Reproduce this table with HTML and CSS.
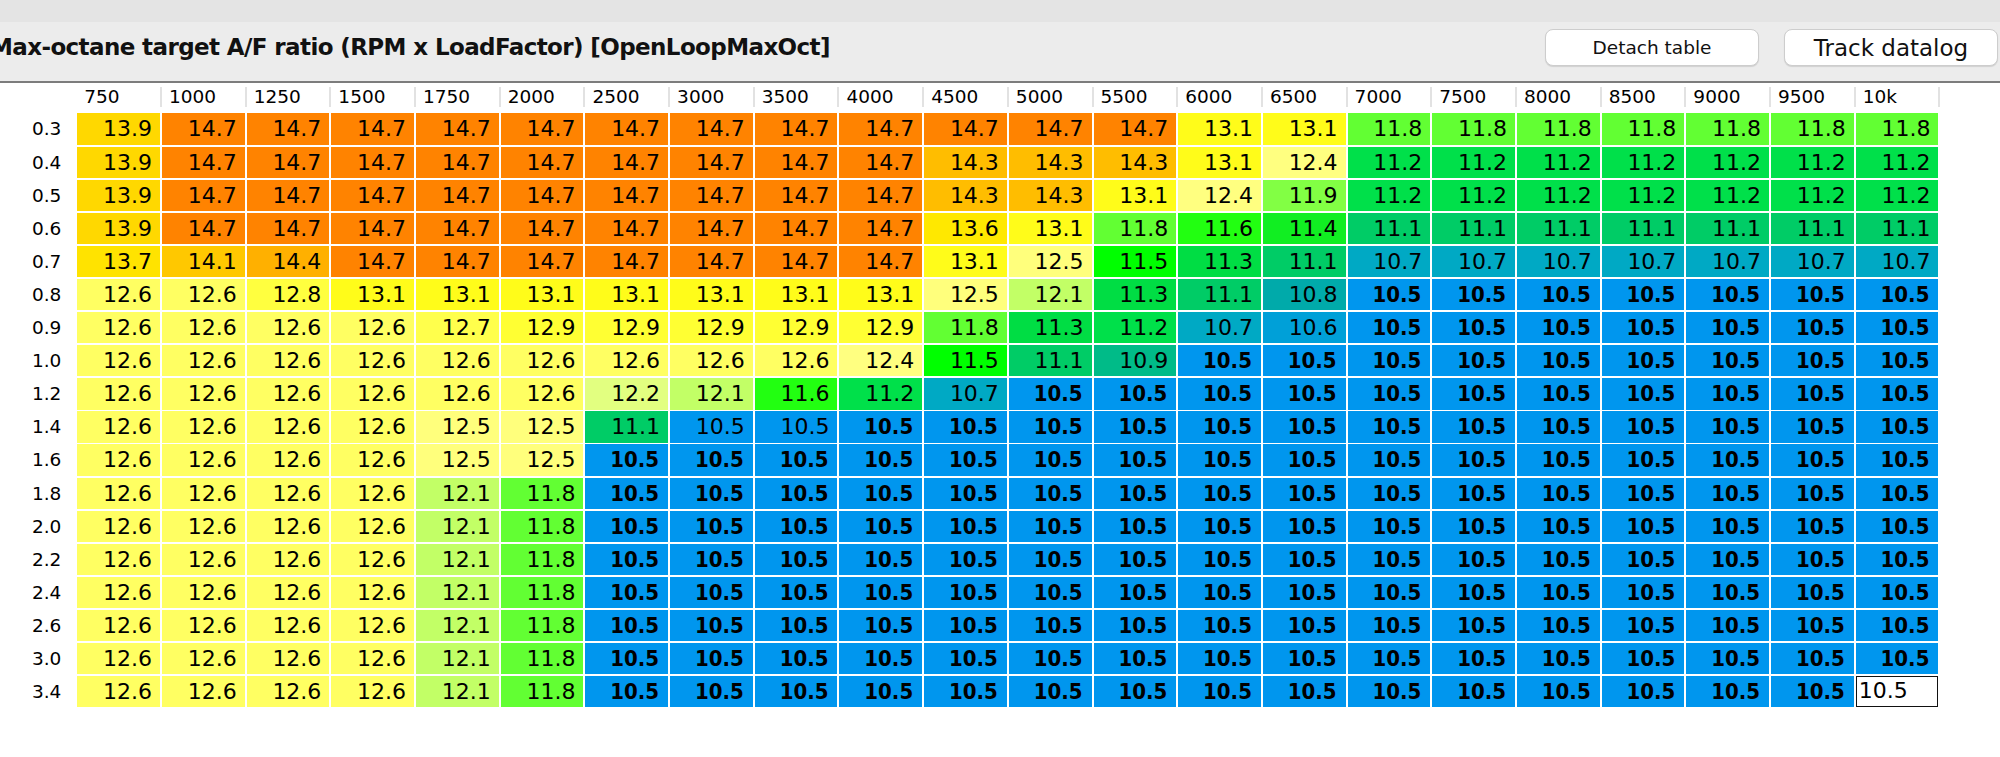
FILE: index.html
```html
<!DOCTYPE html>
<html>
<head>
<meta charset="utf-8">
<title>OpenLoopMaxOct</title>
<link rel="stylesheet" href="styles.css">
</head>
<body>
<div class="topbar"></div>
<div class="titlebar">
  <h1 class="title">Max-octane target A/F ratio (RPM x LoadFactor) [OpenLoopMaxOct]</h1>
  <div class="buttons">
    <button class="btn btn-small">Detach table</button>
    <button class="btn btn-large">Track datalog</button>
  </div>
</div>
<div class="grid" id="grid"></div>
<script src="app.js"></script>
</body>
</html>
```
FILE: styles.css
```css
body {
  margin: 0;
  width: 2000px;
  height: 757px;
  overflow: hidden;
  background: #ffffff;
  font-family: "DejaVu Sans", "Liberation Sans", sans-serif;
  color: #000;
}
.topbar {
  height: 22px;
  background: #e4e4e4;
}
.titlebar {
  box-sizing: border-box;
  height: 61px;
  background: #ececec;
  border-bottom: 2px solid #7c7c7c;
  display: flex;
  align-items: flex-start;
  padding-top: 7px;
  overflow: hidden;
}
.title {
  margin: 0 0 0 -10px;
  font-size: 23px;
  font-weight: bold;
  letter-spacing: -0.6px;
  line-height: 37px;
  white-space: nowrap;
  color: #111;
}
.buttons {
  margin-left: auto;
  display: flex;
  gap: 25px;
  padding-right: 2px;
}
.btn {
  width: 214px;
  height: 37px;
  padding: 0;
  background: #ffffff;
  border: 1px solid #cdcdcd;
  border-radius: 8px;
  box-shadow: 0 1px 1px rgba(0,0,0,0.12);
  font-family: inherit;
  color: #111;
}
.btn-small { font-size: 18.5px; }
.btn-large { font-size: 23px; }

.grid {
  display: grid;
  grid-template-columns: 75.3px repeat(22, 82.7px);
  grid-template-rows: 28.7px repeat(18, 31.3px);
  column-gap: 2px;
  row-gap: 1.8px;
}
.hd {
  align-self: center;
  height: 20px;
  line-height: 20px;
  font-size: 18.5px;
  padding-left: 7px;
  margin-right: -2px;
  border-right: 2px solid #e2e2e2;
  white-space: nowrap;
}
.rl {
  font-size: 18.5px;
  line-height: 31.3px;
  text-align: right;
  padding-right: 14px;
}
.c {
  font-size: 22px;
  line-height: 31.3px;
  text-align: right;
  padding-right: 8px;
  white-space: nowrap;
}
.c.b {
  font-family: "DejaVu Sans Condensed", "DejaVu Sans", sans-serif;
  font-stretch: condensed;
  font-weight: bold;
  padding-right: 9px;
}
.c.edit {
  background: #fff;
  box-sizing: border-box;
  border: 1.5px solid #111;
  text-align: left;
  padding: 0 0 0 2px;
  line-height: 28.3px;
  font-weight: normal;
}
.v147 { background: #ff8300; }
.v144 { background: #ffb000; }
.v143 { background: #ffbd00; }
.v141 { background: #ffc800; }
.v139 { background: #ffd800; }
.v137 { background: #ffe300; }
.v136 { background: #ffe800; }
.v131 { background: #fffc1a; }
.v129 { background: #ffff33; }
.v128 { background: #ffff3f; }
.v127 { background: #ffff4c; }
.v126 { background: #ffff62; }
.v125 { background: #ffff7c; }
.v124 { background: #ffff80; }
.v122 { background: #e2ff80; }
.v121 { background: #c2ff66; }
.v119 { background: #82ff44; }
.v118 { background: #62ff33; }
.v116 { background: #22ff11; }
.v115 { background: #00ff00; }
.v114 { background: #11ee22; }
.v113 { background: #00dd44; }
.v112 { background: #00e04a; }
.v111 { background: #00cc66; }
.v109 { background: #00bb88; }
.v108 { background: #00aaaa; }
.v107 { background: #00a9c4; }
.v106 { background: #00a0d8; }
.v105 { background: #0096ee; }
```
FILE: app.js
```js
(function () {
  var cols = ["750","1000","1250","1500","1750","2000","2500","3000","3500","4000","4500","5000","5500","6000","6500","7000","7500","8000","8500","9000","9500","10k"];
  var rows = ["0.3","0.4","0.5","0.6","0.7","0.8","0.9","1.0","1.2","1.4","1.6","1.8","2.0","2.2","2.4","2.6","3.0","3.4"];
  var data = [
    "13.9 14.7*12 13.1*2 11.8*7",
    "13.9 14.7*9 14.3*3 13.1 12.4 11.2*7",
    "13.9 14.7*9 14.3*2 13.1 12.4 11.9 11.2*7",
    "13.9 14.7*9 13.6 13.1 11.8 11.6 11.4 11.1*7",
    "13.7 14.1 14.4 14.7*7 13.1 12.5 11.5 11.3 11.1 10.7*7",
    "12.6*2 12.8 13.1*7 12.5 12.1 11.3 11.1 10.8 10.5*7",
    "12.6*4 12.7 12.9*5 11.8 11.3 11.2 10.7 10.6 10.5*7",
    "12.6*9 12.4 11.5 11.1 10.9 10.5*9",
    "12.6*6 12.2 12.1 11.6 11.2 10.7 10.5*11",
    "12.6*4 12.5*2 11.1 10.5r*2 10.5*13",
    "12.6*4 12.5*2 10.5*16",
    "12.6*4 12.1 11.8 10.5*16",
    "12.6*4 12.1 11.8 10.5*16",
    "12.6*4 12.1 11.8 10.5*16",
    "12.6*4 12.1 11.8 10.5*16",
    "12.6*4 12.1 11.8 10.5*16",
    "12.6*4 12.1 11.8 10.5*16",
    "12.6*4 12.1 11.8 10.5*15 10.5e"
  ];
  var grid = document.getElementById("grid");
  function el(cls, text) {
    var d = document.createElement("div");
    d.className = cls;
    if (text) d.textContent = text;
    grid.appendChild(d);
  }
  el("corner", "");
  cols.forEach(function (c) { el("hd", c); });
  data.forEach(function (line, ri) {
    el("rl", rows[ri]);
    line.split(" ").forEach(function (tok) {
      var parts = tok.split("*");
      var n = parts[1] ? parseInt(parts[1], 10) : 1;
      var raw = parts[0];
      var flag = raw.replace(/[0-9.]/g, "");
      var v = raw.replace(/[^0-9.]/g, "");
      for (var i = 0; i < n; i++) {
        var cls = "c v" + v.replace(".", "");
        if (flag === "e") cls = "c edit";
        else if (v === "10.5" && flag !== "r") cls += " b";
        el(cls, v);
      }
    });
  });
})();
```
